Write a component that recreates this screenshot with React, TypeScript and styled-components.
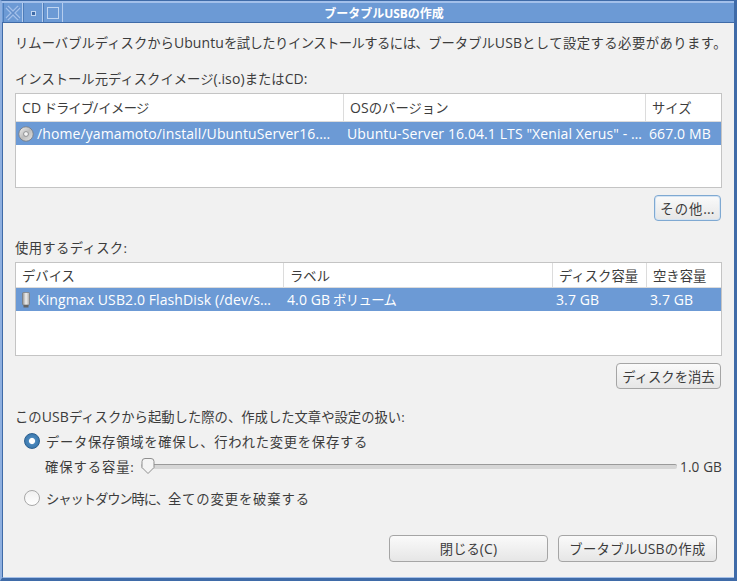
import styled, { createGlobalStyle } from 'styled-components';

const GlobalStyle = createGlobalStyle`
  html, body {
    margin: 0;
    padding: 0;
    background: #f1f1f1;
  }
  * {
    box-sizing: border-box;
  }
`;

const FONT = `"Open Sans", "Noto Sans CJK JP", sans-serif`;

const DISC_COLUMNS = '328px 302px 1fr';
const USB_COLUMNS = '268px 269px 94px 1fr';

const App = () => {
  return (
    <Window>
      <GlobalStyle />
      <TitleBar>
        <WindowButton>
          <svg width="18" height="18" viewBox="0 0 18 18">
            <path d="M3 3 L15 15 M15 3 L3 15" stroke="#a3c0ea" strokeWidth="4" />
            <path d="M3 3 L15 15 M15 3 L3 15" stroke="#6490cc" strokeWidth="1.6" />
          </svg>
        </WindowButton>
        <WindowButton>
          <svg width="16" height="16" viewBox="0 0 16 16">
            <rect x="6.5" y="6.5" width="4" height="4" fill="#3f6ba8" stroke="#c3d6f0" strokeWidth="1" />
          </svg>
        </WindowButton>
        <WindowButton>
          <svg width="16" height="16" viewBox="0 0 16 16">
            <rect x="2.5" y="2.5" width="11" height="11" fill="#6c9ad5" stroke="#c0d5f1" strokeWidth="1" />
          </svg>
        </WindowButton>
        <Title>ブータブルUSBの作成</Title>
      </TitleBar>
      <Body>
        <Intro>
          リムーバブルディスクから<Latin>Ubuntu</Latin>
          <Spaced $spacing={-0.55}>を試したりインストールするには、</Spaced>ブータブル<Latin>USB</Latin>
          <Spaced $spacing={0.45}>として設定する必要があります。</Spaced>
        </Intro>
        <SectionLabel>
          インストール元ディスクイメージ<Latin>(.iso)</Latin>または<Latin>CD:</Latin>
        </SectionLabel>
        <Table $height={95}>
          <HeaderRow $columns={DISC_COLUMNS}>
            <HeaderCell>
              <Latin>CD</Latin>
              <Spaced $spacing={-1}>&nbsp;ドライブ</Spaced>
              <Latin>/</Latin>
              <Spaced $spacing={-0.6}>イメージ</Spaced>
            </HeaderCell>
            <HeaderCell>
              <Latin>OS</Latin>のバージョン
            </HeaderCell>
            <HeaderCell $last>サイズ</HeaderCell>
          </HeaderRow>
          <SelectedRow $columns={DISC_COLUMNS}>
            <IconCell>
              <svg width="16" height="16" viewBox="0 0 16 16">
                <defs>
                  <linearGradient id="disc" x1="0" y1="0" x2="1" y2="1">
                    <stop offset="0" stopColor="#f2f2f2" />
                    <stop offset="0.5" stopColor="#bdbdbd" />
                    <stop offset="1" stopColor="#e6e6e6" />
                  </linearGradient>
                </defs>
                <circle cx="8" cy="8" r="7.2" fill="url(#disc)" stroke="#77797c" strokeWidth="0.8" />
                <circle cx="8" cy="8" r="2.4" fill="#f5f5f5" stroke="#7d7f82" strokeWidth="0.8" />
              </svg>
              <Latin>/home/yamamoto/install/UbuntuServer16.…</Latin>
            </IconCell>
            <BodyCell>
              <Latin>Ubuntu-Server 16.04.1 LTS "Xenial Xerus" - …</Latin>
            </BodyCell>
            <BodyCell>
              <Latin>667.0 MB</Latin>
            </BodyCell>
          </SelectedRow>
        </Table>
        <ButtonRow>
          <FocusButton>
            <Spaced $spacing={1}>その他</Spaced>
            <Latin>...</Latin>
          </FocusButton>
        </ButtonRow>
        <SectionLabel $top={18}>
          <Spaced $spacing={0.35}>使用するディスク:</Spaced>
        </SectionLabel>
        <Table $height={94}>
          <HeaderRow $columns={USB_COLUMNS} $height={25}>
            <HeaderCell>デバイス</HeaderCell>
            <HeaderCell>ラベル</HeaderCell>
            <HeaderCell>ディスク容量</HeaderCell>
            <HeaderCell $last>空き容量</HeaderCell>
          </HeaderRow>
          <SelectedRow $columns={USB_COLUMNS}>
            <IconCell>
              <svg width="16" height="16" viewBox="0 0 16 16">
                <defs>
                  <linearGradient id="stick" x1="0" y1="0" x2="1" y2="0">
                    <stop offset="0" stopColor="#8f8f8f" />
                    <stop offset="0.5" stopColor="#f0f0f0" />
                    <stop offset="1" stopColor="#a8a8a8" />
                  </linearGradient>
                </defs>
                <rect x="4.5" y="0.5" width="7" height="12.5" rx="1" fill="url(#stick)" stroke="#7a7a7a" strokeWidth="0.7" />
                <rect x="5.5" y="13" width="5" height="2.5" fill="#666" />
              </svg>
              <Latin>Kingmax USB2.0 FlashDisk (/dev/s…</Latin>
            </IconCell>
            <BodyCell>
              <Latin>4.0 GB</Latin>
              <Spaced $spacing={-0.6}>&nbsp;ボリューム</Spaced>
            </BodyCell>
            <BodyCell>
              <Latin>3.7 GB</Latin>
            </BodyCell>
            <BodyCell>
              <Latin>3.7 GB</Latin>
            </BodyCell>
          </SelectedRow>
        </Table>
        <ButtonRow>
          <EraseButton>ディスクを消去</EraseButton>
        </ButtonRow>
        <SectionLabel $top={19}>
          この<Latin>USB</Latin>ディスクから起動した際の、作成した文章や設定の扱い:
        </SectionLabel>
        <RadioRow $top={5}>
          <RadioOn />
          <Spaced $spacing={0.7}>データ保存領域を確保し、行われた変更を保存する</Spaced>
        </RadioRow>
        <SliderRow>
          <Spaced $spacing={0.9}>確保する容量:</Spaced>
          <SliderTrack>
            <SliderThumb width="14" height="18" viewBox="0 0 14 18">
              <path
                d="M4 1.5 H10 A3 3 0 0 1 13 4.5 V10.5 L7 16.5 L1 10.5 V4.5 A3 3 0 0 1 4 1.5 Z"
                fill="#f4f4f4"
                stroke="#8f8f8f"
              />
            </SliderThumb>
          </SliderTrack>
          <SliderValue>1.0 GB</SliderValue>
        </SliderRow>
        <RadioRow $top={11}>
          <RadioOff />
          <span>
            <Spaced $spacing={-1.1}>シャットダウン時に、</Spaced>
            <Spaced $spacing={0.87}>全ての変更を破棄する</Spaced>
          </span>
        </RadioRow>
        <Footer>
          <WideButton>
            閉じる<Latin>(C)</Latin>
          </WideButton>
          <WideButton>
            <Spaced $spacing={0.3}>ブータブル</Spaced>
            <Latin>USB</Latin>
            <Spaced $spacing={0.3}>の作成</Spaced>
          </WideButton>
        </Footer>
      </Body>
    </Window>
  );
};

export default App;

const Window = styled.div`
  display: flex;
  flex-direction: column;
  width: 737px;
  height: 581px;
  overflow: hidden;
  background: #f1f1f1;
  border-style: solid;
  border-width: 1px 3px 3px 2px;
  border-color: #3f6ba8 #3f6ba8 #3f6ba8 #8fb0e0;
  font-family: ${FONT};
  font-size: 13.33px;
  color: #3c3c3c;
`;

const Latin = styled.span`
  font-size: 14px;
  letter-spacing: 0.1px;
`;

const Spaced = styled.span<{ $spacing: number }>`
  letter-spacing: ${({ $spacing }) => $spacing}px;
`;

const TitleBar = styled.div`
  position: relative;
  display: flex;
  flex-shrink: 0;
  align-items: center;
  height: 22px;
  padding-left: 1px;
  background: #6c9ad5;
  border-top: 2px solid #a3c0ea;
  border-bottom: 1px solid #3f6ba8;
`;

const WindowButton = styled.div`
  display: flex;
  align-items: center;
  justify-content: center;
  width: 20px;
  height: 19px;
  border-right: 1px solid #b5cdee;
  border-left: 1px solid #4f7db9;
`;

const Title = styled.div`
  position: absolute;
  left: 32px;
  right: 0;
  text-align: center;
  font-size: 12px;
  font-weight: 700;
  color: #ffffff;
`;

const Body = styled.div`
  display: flex;
  flex-direction: column;
  flex: 1;
  padding: 11px 12px 0;
  border-left: 1px solid #3f6ba8;
  border-bottom: 1px solid #a5c0e8;
`;

const Intro = styled.div`
  height: 18px;
  line-height: 18px;
  white-space: nowrap;
`;

const SectionLabel = styled.div<{ $top?: number }>`
  height: 18px;
  margin-top: ${({ $top }) => $top ?? 18}px;
  line-height: 18px;
  white-space: nowrap;
`;

const Table = styled.div<{ $height: number }>`
  display: flex;
  flex-direction: column;
  height: ${({ $height }) => $height}px;
  margin-top: 5px;
  background: #ffffff;
  border: 1px solid #c4c4c4;
`;

const HeaderRow = styled.div<{ $columns: string; $height?: number }>`
  display: grid;
  grid-template-columns: ${({ $columns }) => $columns};
  height: ${({ $height }) => $height ?? 28}px;
  border-bottom: 1px solid #dcdcdc;
`;

const HeaderCell = styled.div<{ $last?: boolean }>`
  display: flex;
  align-items: center;
  padding-left: 6px;
  white-space: nowrap;
  border-right: ${({ $last }) => ($last ? 'none' : '1px solid #dcdcdc')};
`;

const SelectedRow = styled.div<{ $columns: string }>`
  display: grid;
  grid-template-columns: ${({ $columns }) => $columns};
  height: 23px;
  background: #6c9ad5;
  color: #ffffff;
`;

const BodyCell = styled.div`
  display: flex;
  align-items: center;
  padding-left: 3px;
  white-space: pre;
  overflow: hidden;
`;

const IconCell = styled(BodyCell)`
  gap: 3px;
  padding-left: 2px;
`;

const ButtonRow = styled.div`
  display: flex;
  justify-content: flex-end;
  margin-top: 7px;
  padding-right: 1px;
`;

const PushButton = styled.div`
  display: flex;
  align-items: center;
  justify-content: center;
  height: 26px;
  background: linear-gradient(#fafafa, #e6e6e6);
  border: 1px solid #a5a5a5;
  border-radius: 4px;
  white-space: nowrap;
`;

const EraseButton = styled(PushButton)`
  width: 105px;
`;

const FocusButton = styled(PushButton)`
  width: 67px;
  border-color: #7fa9d2;
  box-shadow: inset 0 0 0 1px #d3e3f3;
`;

const RadioRow = styled.div<{ $top: number }>`
  display: flex;
  align-items: center;
  gap: 6px;
  height: 20px;
  margin-top: ${({ $top }) => $top}px;
  padding-left: 9px;
  white-space: nowrap;
`;

const RadioOff = styled.div`
  width: 16px;
  height: 16px;
  background: linear-gradient(#f0f0f0, #ffffff);
  border: 1px solid #a8a8a8;
  border-radius: 50%;
`;

const RadioOn = styled(RadioOff)`
  background: radial-gradient(circle, #ffffff 0 2.6px, #4a87bb 3.6px, #2f6ea6 100%);
  border-color: #2d5f8e;
`;

const SliderRow = styled.div`
  display: flex;
  align-items: center;
  gap: 3px;
  height: 22px;
  margin-top: 4px;
  padding-left: 30px;
  white-space: nowrap;
`;

const SliderTrack = styled.div`
  position: relative;
  flex: 1;
  height: 5px;
  margin-left: 3px;
  background: #d6d6d6;
  border-top: 1px solid #9a9a9a;
  border-radius: 2px;
`;

const SliderThumb = styled.svg`
  position: absolute;
  top: -8px;
  left: 0;
`;

const SliderValue = styled(Latin)`
  font-size: 13.6px;
`;

const Footer = styled.div`
  display: flex;
  gap: 10px;
  margin-top: 27px;
  padding-left: 374px;
`;

const WideButton = styled(PushButton)`
  width: 159px;
  height: 27px;
`;
